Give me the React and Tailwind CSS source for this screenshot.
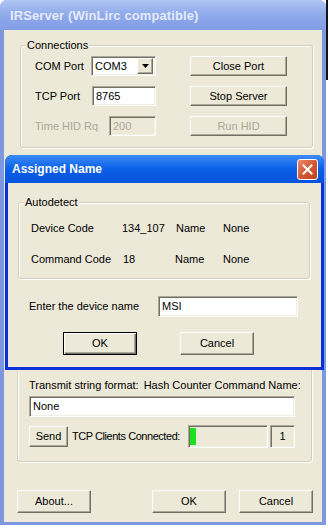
import React from 'react';

const raised = 'border border-t-white border-l-white border-b-[#716f64] border-r-[#716f64] shadow-[inset_-1px_-1px_0_#aca899] bg-[#ece9d8]';
const sunken = 'border border-t-[#aca899] border-l-[#aca899] border-b-white border-r-white shadow-[inset_1px_1px_0_#716f64,inset_-1px_-1px_0_#f1efe2]';

function Btn({ children, className = '', disabled, isDefault }) {
  const base = isDefault
    ? 'border border-black bg-[#ece9d8] shadow-[inset_1px_1px_0_#fff,inset_-1px_-1px_0_#716f64,inset_-2px_-2px_0_#aca899]'
    : raised;
  return (
    <div className={`${base} flex items-center justify-center shrink-0 whitespace-nowrap ${disabled ? 'text-[#aca899]' : 'text-black'} ${className}`}>
      {children}
    </div>
  );
}

function Field({ children, className = '', disabled }) {
  return (
    <div className={`${sunken} ${disabled ? 'bg-[#ece9d8] text-[#aca899]' : 'bg-white text-black'} flex items-center pl-[3px] shrink-0 ${className}`}>
      {children}
    </div>
  );
}

function Group({ label, className = '', children }) {
  return (
    <div className={`relative border border-[#d0d0bf] rounded-[3px] shadow-[inset_1px_1px_0_#fff,1px_1px_0_#fff] ${className}`}>
      {label && <span className="absolute -top-[8px] left-[5px] bg-[#ece9d8] px-[1px] leading-[14px]">{label}</span>}
      {children}
    </div>
  );
}

export default function App() {
  return (
    <div className="relative w-[328px] h-[528px] overflow-hidden bg-white font-['Liberation_Sans',Arial,sans-serif] text-[11px] leading-[13px] text-black flex whitespace-nowrap">
      {/* main window (inactive) */}
      <div className="w-[326px] h-[525px] flex flex-col rounded-t-[7px] bg-[#7d98e0] shrink-0">
        <div className="h-[30px] shrink-0 rounded-t-[7px] bg-gradient-to-b from-[#b0c6f2] via-[#8fa9ea] to-[#819de6] flex items-center pl-[10px]">
          <span className="text-[13px] font-bold text-[#e4ebfa] tracking-[0.1px]">IRServer (WinLirc compatible)</span>
        </div>
        <div className="flex-1 mx-[4px] mb-[3px] bg-[#ece9d8] flex flex-col pt-[15px]">
          <Group label="Connections" className="ml-[16px] w-[293px] h-[103px] pt-[10px] pl-[14px] flex flex-col gap-[10px]">
            <div className="flex items-center h-[20px]">
              <span className="w-[56px]">COM Port</span>
              <Field className="w-[65px] h-[20px] justify-between pr-[2px]">
                <span>COM3</span>
                <div className={`${raised} w-[16px] h-[16px] flex items-center justify-center`}>
                  <svg width="7" height="4" viewBox="0 0 7 4"><path d="M0 0h7L3.5 4z" fill="#000" /></svg>
                </div>
              </Field>
              <Btn className="ml-[34px] w-[97px] h-[20px]">Close Port</Btn>
            </div>
            <div className="flex items-center h-[20px]">
              <span className="w-[57px]">TCP Port</span>
              <Field className="w-[64px] h-[20px]">8765</Field>
              <Btn className="ml-[34px] w-[97px] h-[20px]">Stop Server</Btn>
            </div>
            <div className="flex items-center h-[20px]">
              <span className="w-[74px] text-[#aca899]">Time HID Rq</span>
              <Field disabled className="w-[47px] h-[20px]">200</Field>
              <Btn disabled className="ml-[34px] w-[97px] h-[20px]">Run HID</Btn>
            </div>
          </Group>

          <Group className="ml-[13px] w-[295px] h-[302px] mt-[12px] flex flex-col justify-end pl-[11px] pb-[13px]">
            <div className="h-[14px] mb-[4px] flex items-center gap-[5px]">
              <span>Transmit string format:</span>
              <span>Hash Counter Command Name:</span>
            </div>
            <Field className="w-[266px] h-[21px] mb-[8px]">None</Field>
            <div className="flex items-center h-[23px]">
              <Btn className="w-[39px] h-[21px]">Send</Btn>
              <span className="ml-[4px] w-[116px] shrink-0 tracking-[-0.45px]">TCP Clients Connected:</span>
              <div className={`${sunken} w-[80px] h-[23px] shrink-0 bg-[#ece9d8] pl-[1px] pt-[2px]`}>
                <div className="w-[6px] h-[17px] bg-[#1ee01e]" />
              </div>
              <div className={`${sunken} ml-[2px] w-[25px] h-[23px] shrink-0 bg-[#ece9d8] flex items-center justify-center`}>1</div>
            </div>
          </Group>

          <div className="flex mt-[28px] ml-[13px]">
            <Btn className="w-[74px] h-[23px]">About...</Btn>
            <Btn className="ml-[61px] w-[74px] h-[23px]">OK</Btn>
            <Btn className="ml-[13px] w-[74px] h-[23px]">Cancel</Btn>
          </div>
        </div>
      </div>
      <div className="w-[2px] flex flex-col">
        <div className="h-[80px] bg-[#141414]" />
      </div>

      {/* dialog window (active) */}
      <div className="absolute left-[5px] top-[155px] w-[319px] h-[215px] flex flex-col rounded-t-[7px] bg-[#0831d9]">
        <div className="h-[28px] shrink-0 rounded-t-[7px] bg-gradient-to-b from-[#3a8cf7] via-[#0a5fe8] to-[#0753dc] flex items-center justify-between pl-[7px] pr-[6px]">
          <span className="text-[12px] font-bold text-white">Assigned Name</span>
          <div className="w-[21px] h-[21px] rounded-[3px] border border-white bg-gradient-to-br from-[#e9876a] via-[#d35a34] to-[#c0401c] flex items-center justify-center">
            <svg width="11" height="11" viewBox="0 0 11 11"><path d="M1.5 1.5l8 8M9.5 1.5l-8 8" stroke="#fff" strokeWidth="2" strokeLinecap="square" /></svg>
          </div>
        </div>
        <div className="flex-1 mx-[3px] mb-[3px] bg-[#ece9d8] flex flex-col pt-[19px]">
          <Group label="Autodetect" className="ml-[10px] w-[292px] h-[77px] pt-[19px] pl-[12px] flex flex-col gap-[18px]">
            <div className="flex h-[13px]">
              <span className="w-[91px]">Device Code</span>
              <span className="w-[54px]">134_107</span>
              <span className="w-[47px]">Name</span>
              <span>None</span>
            </div>
            <div className="flex h-[13px]">
              <span className="w-[91px]">Command Code</span>
              <span className="w-[53px] pl-[1px]">18</span>
              <span className="w-[48px]">Name</span>
              <span>None</span>
            </div>
          </Group>
          <div className="flex items-center mt-[17px] ml-[21px]">
            <span className="w-[129px]">Enter the device name</span>
            <Field className="w-[140px] h-[21px]">MSI</Field>
          </div>
          <div className="flex mt-[15px] ml-[55px]">
            <Btn isDefault className="w-[74px] h-[23px]">OK</Btn>
            <Btn className="ml-[43px] w-[74px] h-[23px]">Cancel</Btn>
          </div>
        </div>
      </div>
    </div>
  );
}
